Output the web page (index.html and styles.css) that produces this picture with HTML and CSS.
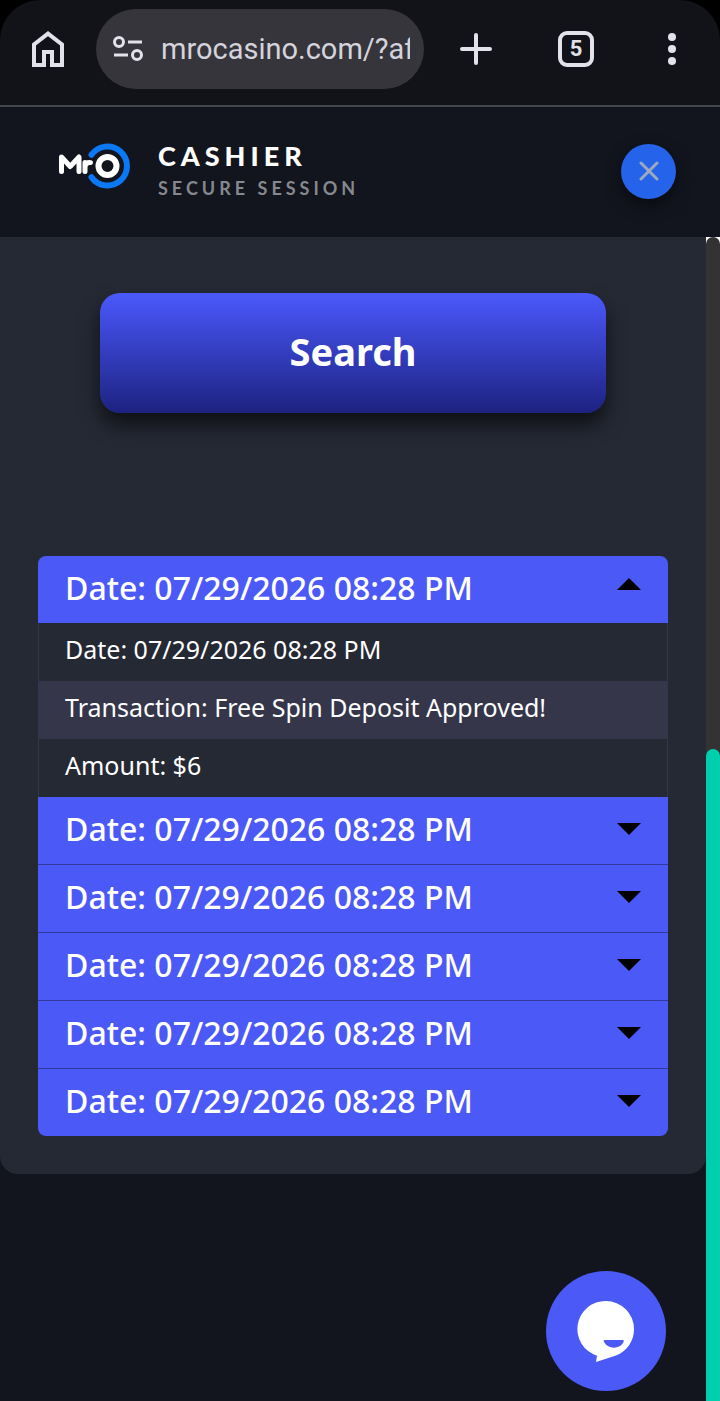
FILE: index.html
```html
<!DOCTYPE html>
<html lang="en">
  <head>
    <meta charset="UTF-8" />
    <meta name="viewport" content="width=device-width, initial-scale=1.0" />
    <title>Cashier</title>
    <link rel="stylesheet" href="styles.css">
  </head>
  <body>
    <!-- browser bar -->
    <div class="browser">
      <div class="toolbar">
        <button class="tool" type="button" aria-label="Home">
          <svg width="32" height="36" viewBox="0 0 32 36" fill="none" stroke="#e3e1e9" stroke-width="4">
            <path d="M2 34V13.5L16 2.6L30 13.5V34H20V21H12V34Z" />
          </svg>
        </button>
        <div class="address">
          <svg class="site-info" width="30" height="26" viewBox="0 0 30 26" fill="none" stroke="#e3e1e9" stroke-width="3">
            <circle cx="6" cy="6" r="4.5" />
            <path d="M15 6H29M1 19H15" />
            <circle cx="24" cy="19" r="4.5" />
          </svg>
          <input class="url" type="text" aria-label="Address" value="mrocasino.com/?af" />
        </div>
        <div class="tools">
          <button class="tool" type="button" aria-label="New tab">
            <svg width="32" height="32" viewBox="0 0 32 32" stroke="#e3e1e9" stroke-width="4" stroke-linecap="round">
              <path d="M16 2V30M2 16H30" />
            </svg>
          </button>
          <button class="tool tabs" type="button" aria-label="Open tabs">5</button>
          <button class="tool menu" type="button" aria-label="Menu">
            <svg width="8" height="32" viewBox="0 0 8 32" fill="#e3e1e9">
              <circle cx="4" cy="4" r="4" />
              <circle cx="4" cy="16" r="4" />
              <circle cx="4" cy="28" r="4" />
            </svg>
          </button>
        </div>
      </div>
    </div>

    <header class="header">
      <svg class="logo" width="72" height="48" viewBox="0 0 72 48" fill="none" stroke-linecap="round" stroke-linejoin="round" role="img" aria-label="MrO">
        <path d="M33.5 12.8A19.5 19.5 0 1 1 33.5 35.2" stroke="#0b78f5" stroke-width="6" />
        <path d="M3.5 29.5V15L12.2 24.5L21 15V29.5" stroke="#fff" stroke-width="5" />
        <path d="M27 29.5V20.5M27 24Q28.5 20 32.5 20.6" stroke="#fff" stroke-width="5" />
        <circle cx="49.5" cy="24" r="9" stroke="#fff" stroke-width="6" />
      </svg>
      <div class="titles">
        <h1>CASHIER</h1>
        <p>SECURE SESSION</p>
      </div>
      <button class="close" type="button" aria-label="Close">
        <svg width="20" height="20" viewBox="0 0 20 20" stroke="#9ca9bf" stroke-width="3" stroke-linecap="round">
          <path d="M2 2L18 18M18 2L2 18" />
        </svg>
      </button>
    </header>

    <div class="content">
      <main class="page">
        <section class="panel">
          <button class="search" type="submit">Search</button>

          <div class="history">
            <div class="item open">
              <button class="item-title" type="button" aria-expanded="true">Date: 07/29/2026 08:28 PM</button>
              <ul class="details">
                <li>Date: 07/29/2026 08:28 PM</li>
                <li>Transaction: Free Spin Deposit Approved!</li>
                <li>Amount: $6</li>
              </ul>
            </div>
            <div class="item">
              <button class="item-title" type="button" aria-expanded="false">Date: 07/29/2026 08:28 PM</button>
            </div>
            <div class="item">
              <button class="item-title" type="button" aria-expanded="false">Date: 07/29/2026 08:28 PM</button>
            </div>
            <div class="item">
              <button class="item-title" type="button" aria-expanded="false">Date: 07/29/2026 08:28 PM</button>
            </div>
            <div class="item">
              <button class="item-title" type="button" aria-expanded="false">Date: 07/29/2026 08:28 PM</button>
            </div>
            <div class="item">
              <button class="item-title" type="button" aria-expanded="false">Date: 07/29/2026 08:28 PM</button>
            </div>
          </div>
        </section>
      </main>
      <div class="scrollbar"><div class="track"><div class="thumb"></div></div></div>
    </div>

    <button class="chat" type="button" aria-label="Open chat">
      <svg width="58" height="62" viewBox="0 0 58 62">
        <path d="M29 1A28 28 0 0 0 20 55.7L19 62L39 55.5C50 51.5 57 41 57 29A28 28 0 0 0 29 1Z" fill="#fff" />
        <path d="M28 40H45.500Q47.500 40 46.500 42C43 49.500 31 49.500 27 42Q26 40 28 40Z" fill="#4b59f7" />
      </svg>
    </button>
  </body>
</html>
```
FILE: styles.css
```css
* {
  box-sizing: border-box;
}
body {
  display: flex;
  flex-direction: column;
  min-height: 100vh;
  margin: 0;
  background: #12151e;
  color: #fff;
  font-family: "Noto Sans", sans-serif;
}
button {
  margin: 0;
  padding: 0;
  border: 0;
  background: none;
  color: inherit;
  font-family: inherit;
  cursor: pointer;
}
svg {
  display: block;
}

/* browser bar */
.browser {
  background: #000;
  border-bottom: 2px solid #45454d;
}
.toolbar {
  display: flex;
  align-items: center;
  height: 105px;
  padding: 0 44px 8px 32px;
  background: #121318;
  border-radius: 40px 40px 0 0;
}
.address {
  display: flex;
  align-items: center;
  gap: 18px;
  width: 328px;
  height: 80px;
  margin-left: 32px;
  padding: 0 14px 0 17px;
  background: #36353b;
  border-radius: 40px;
}
.site-info {
  flex: none;
}
.url {
  flex: 1;
  min-width: 0;
  padding: 0;
  border: 0;
  outline: 0;
  background: none;
  color: #d5d3db;
  font-family: Roboto, sans-serif;
  font-size: 29px;
}
.tools {
  display: flex;
  flex: 1;
  align-items: center;
  gap: 66px;
  padding-left: 36px;
}
.tool {
  color: #e3e1e9;
}
.menu {
  margin-left: auto;
}
.tabs {
  width: 36px;
  height: 36px;
  border: 4px solid #e3e1e9;
  border-radius: 9px;
  font-family: Roboto, sans-serif;
  font-size: 22px;
  font-weight: 700;
  line-height: 28px;
}

/* cashier header */
.header {
  display: flex;
  align-items: center;
  height: 130px;
  padding: 0 44px 2px 58px;
}
.logo {
  margin-bottom: 10px;
}
.titles {
  flex: 1;
  margin-left: 28px;
  font-family: Lato, sans-serif;
}
.titles h1 {
  margin: 2px 0 0;
  font-size: 27px;
  font-weight: 900;
  letter-spacing: 5px;
  line-height: 32px;
}
.titles p {
  margin: 0;
  color: #86888e;
  font-size: 18px;
  font-weight: 700;
  letter-spacing: 4px;
  line-height: 32px;
}
.close {
  display: grid;
  place-items: center;
  width: 55px;
  height: 55px;
  background: #2563eb;
  border-radius: 50%;
  box-shadow: 0 6px 16px rgba(0, 0, 0, 0.5);
}

/* page */
.content {
  display: flex;
  flex: 1;
}
.page {
  flex: 1;
}
.panel {
  padding: 56px 38px 38px;
  background: #252934;
  border-radius: 0 0 18px 18px;
}
.search {
  display: block;
  width: calc(100% - 124px);
  height: 120px;
  margin: 0 auto 143px;
  padding-bottom: 4px;
  background: linear-gradient(#4b59f7, #4451ec 14%, #1c2280);
  border-radius: 20px;
  box-shadow: 0 12px 20px rgba(0, 0, 0, 0.6);
  font-size: 38px;
  font-weight: 700;
}
.history {
  overflow: hidden;
  border-radius: 8px;
}
.item + .item {
  border-top: 1px solid #343a9c;
}
.open + .item {
  border-top: 0;
}
.item-title {
  display: flex;
  align-items: center;
  justify-content: space-between;
  width: 100%;
  height: 67px;
  padding: 0 27px 4px;
  background: #4b59f7;
  font-size: 32px;
  font-weight: 500;
  text-align: left;
}
.item-title::after {
  content: "";
  border: 12px solid transparent;
  border-top-color: #000;
  border-bottom: 0;
}
.open .item-title::after {
  margin-bottom: 8px;
  border-top: 0;
  border-bottom: 12px solid #000;
}
.details {
  margin: 0;
  padding: 0;
  border: 1px solid #33354a;
  border-width: 0 1px;
  list-style: none;
}
.details li {
  padding: 0 26px 6px;
  font-size: 25px;
  line-height: 52px;
}
.details li:nth-child(even) {
  background: #35364a;
}

/* scrollbar */
.scrollbar {
  display: flex;
  width: 14px;
  background: #fff;
}
.track {
  display: flex;
  flex: 1;
  flex-direction: column;
  background: #333;
  border-radius: 7px 7px 0 0;
}
.track::before {
  content: "";
  flex: 44;
}
.thumb {
  flex: 56;
  background: #00cfae;
  border-radius: 7px 7px 0 0;
}

.chat {
  position: fixed;
  right: 54px;
  bottom: 10px;
  display: grid;
  place-items: center;
  width: 120px;
  height: 120px;
  background: #4b59f7;
  border-radius: 50%;
}
```
